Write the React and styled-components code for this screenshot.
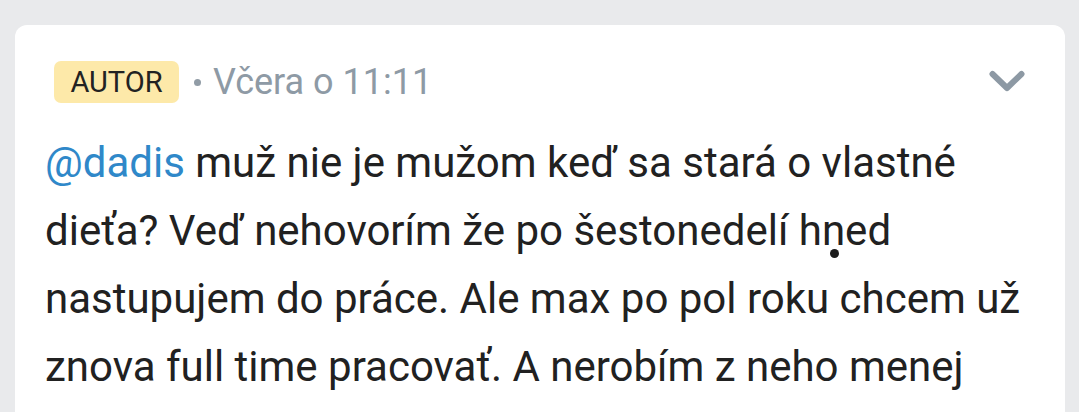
import React from 'react';
import styled, { createGlobalStyle } from 'styled-components';

const GlobalStyle = createGlobalStyle`
  html, body {
    margin: 0;
    padding: 0;
    background: #e9eaec;
    font-family: Roboto, "Noto Sans", "Liberation Sans", sans-serif;
    overflow: hidden;
  }
`

const Page = styled.div`
  width: 1079px;
  height: 412px;
  padding: 25px 14px 0 15px;
  box-sizing: border-box;
  overflow: hidden;
`

const Card = styled.div`
  background: #fff;
  border-radius: 12px 12px 0 0;
  padding: 36px 0 40px 0;
  min-height: 420px;
  box-sizing: border-box;
`

const Header = styled.div`
  display: flex;
  align-items: center;
  height: 42px;
  padding: 0 40px 0 39px;
`

const Badge = styled.span`
  display: inline-flex;
  align-items: center;
  justify-content: center;
  height: 42px;
  width: 125px;
  box-sizing: border-box;
  border-radius: 7px;
  background: #fde9a9;
  color: #222;
  font-size: 29px;
`

const Dot = styled.span`
  width: 7px;
  height: 7px;
  border-radius: 50%;
  background: #919ca6;
  margin: 0 12px 0 15px;
`

const Meta = styled.span`
  font-size: 36px;
  color: #8e9aa5;
`

const Toggle = styled.button`
  margin-left: auto;
  background: none;
  border: 0;
  padding: 0;
  display: flex;
  color: #8d99a4;
`

const Body = styled.p`
  margin: 26px 0 0 0;
  padding: 0 30px 0 30px;
  font-size: 42px;
  line-height: 68px;
  color: #212121;
`

const Mention = styled.span`
  color: #2f88c9;
`

const Marked = styled.span`
  position: relative;
`

const TouchDot = styled.span`
  position: absolute;
  left: 31px;
  top: 43px;
  width: 9px;
  height: 9px;
  border-radius: 50%;
  background: #1c1c1c;
`

const Chevron = () => (
  <svg width="36" height="24" viewBox="0 0 36 24" fill="none">
    <path d="M3.5 4 L18 18 L32.5 4" stroke="currentColor" strokeWidth="6" strokeLinecap="round" strokeLinejoin="round" />
  </svg>
)

export default function App() {
  return (
    <>
      <GlobalStyle />
      <Page>
        <Card>
          <Header>
            <Badge>AUTOR</Badge>
            <Dot />
            <Meta>Včera o 11:11</Meta>
            <Toggle aria-label="rozbaliť">
              <Chevron />
            </Toggle>
          </Header>
          <Body>
            <Mention>@dadis</Mention> muž nie je mužom keď sa stará o vlastné dieťa? Veď nehovorím že po šestonedelí{' '}
            <Marked>hned<TouchDot /></Marked> nastupujem do práce. Ale max po pol roku chcem už znova full time pracovať. A nerobím z neho menej
          </Body>
        </Card>
      </Page>
    </>
  )
}
